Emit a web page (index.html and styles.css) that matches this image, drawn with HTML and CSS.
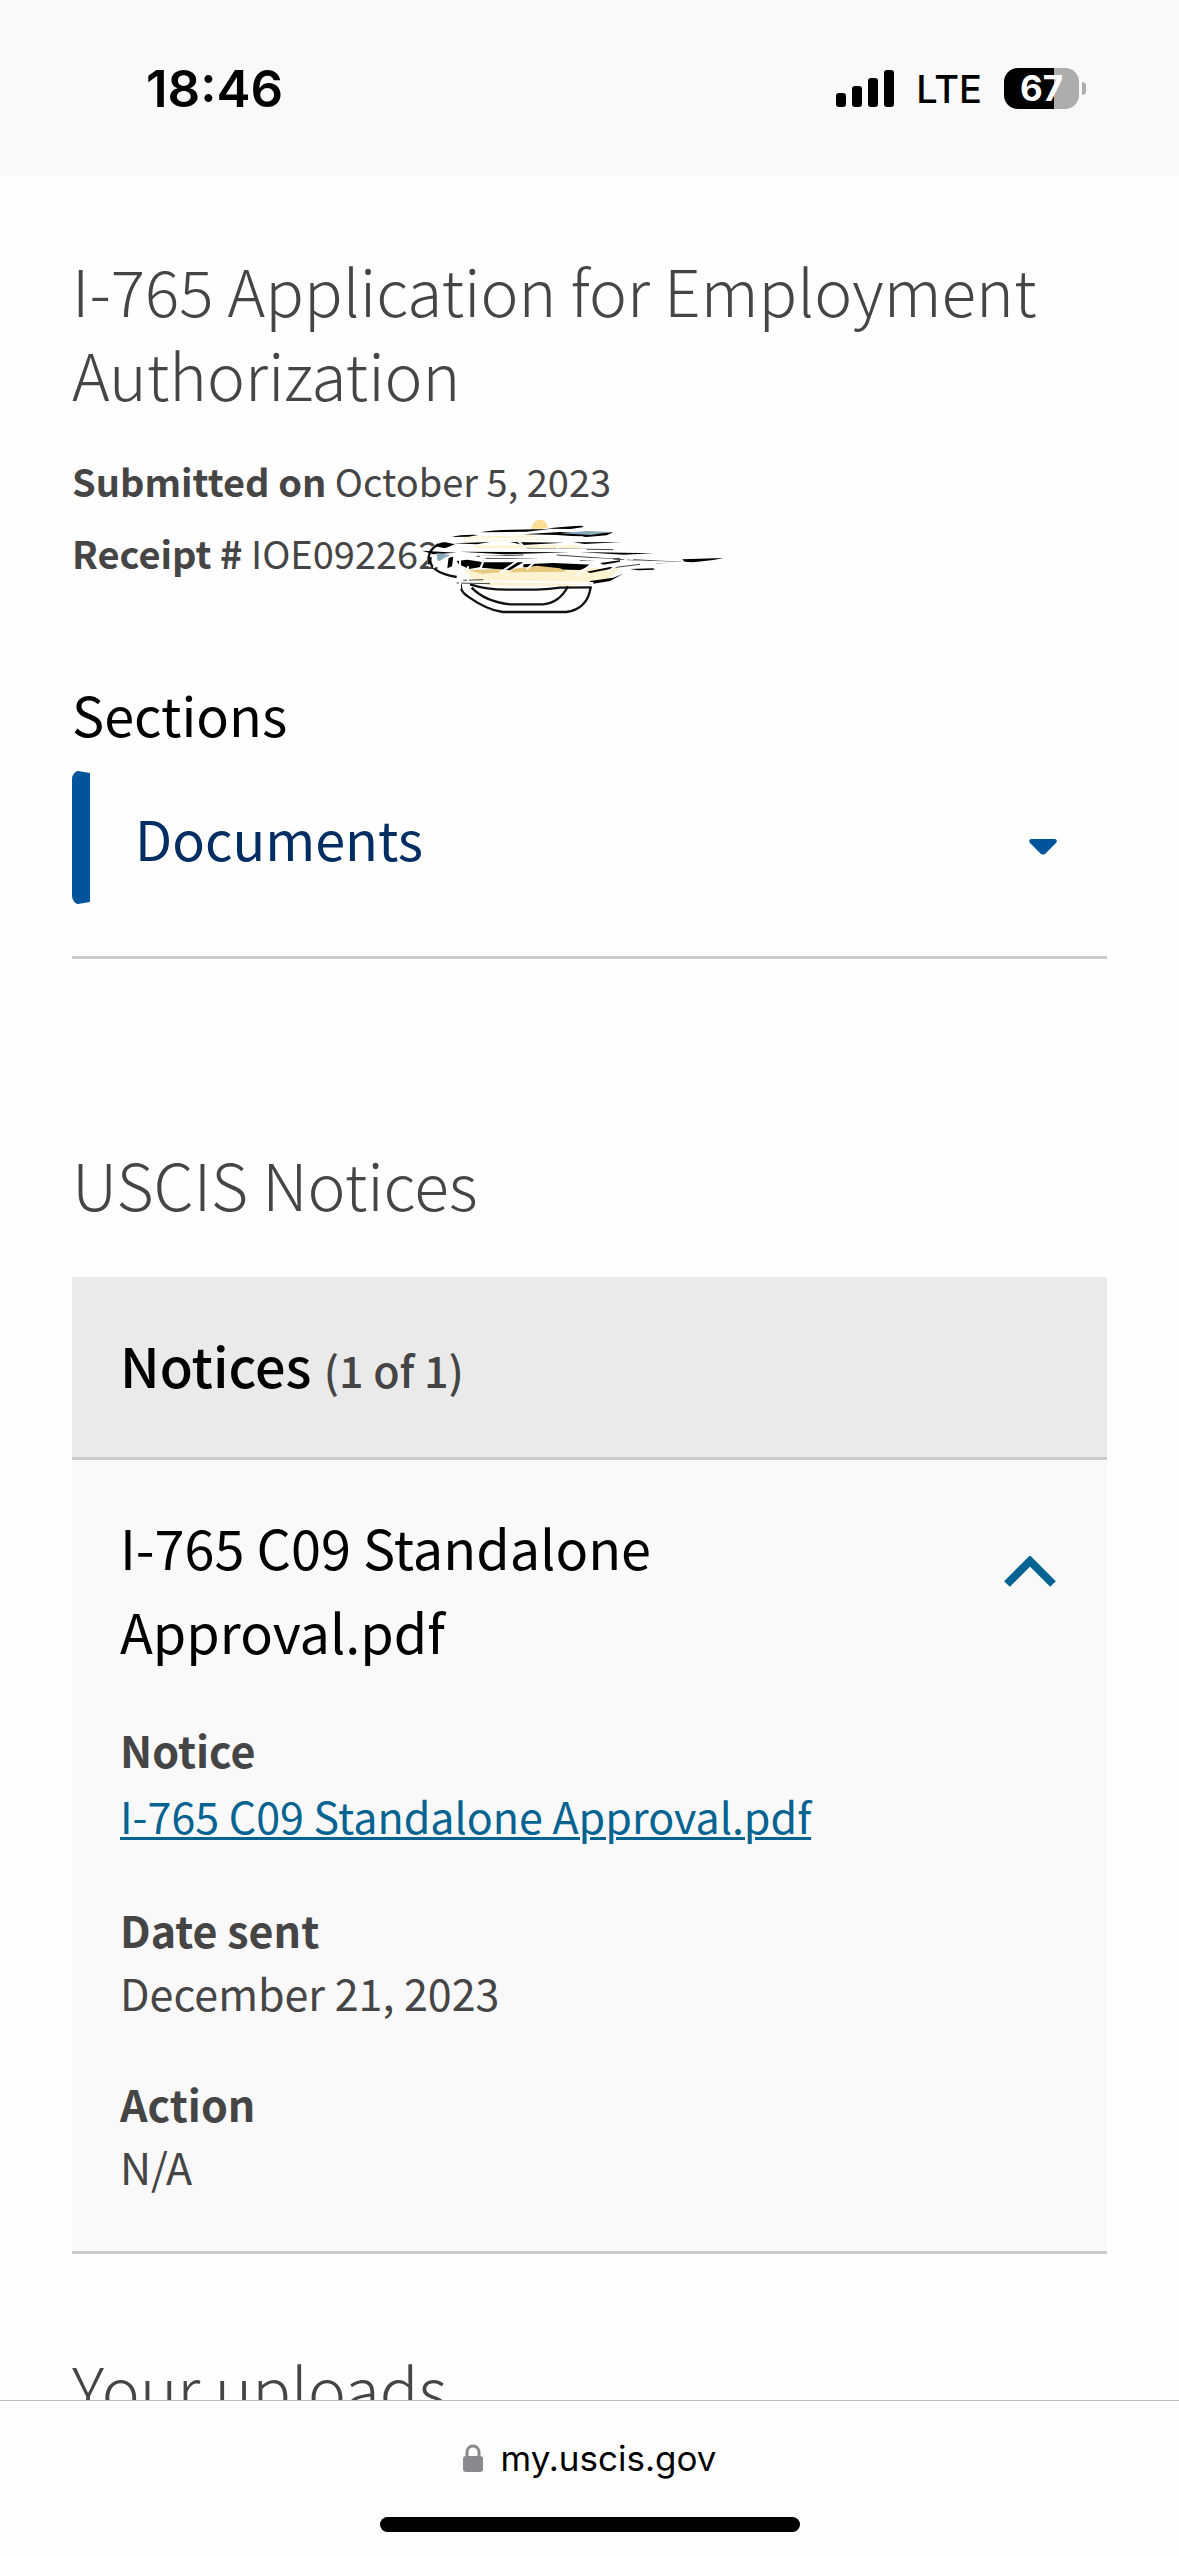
FILE: index.html
```html
<!DOCTYPE html>
<html lang="en">
<head>
    <meta charset="UTF-8">
    <meta name="viewport" content="width=device-width, initial-scale=1.0">
    <title>I-765 Application for Employment Authorization</title>
    <link rel="stylesheet" href="styles.css">
</head>
<body>
    <!-- Status bar -->
    <header class="status-bar">
        <time class="clock">18:46</time>
        <div class="status-icons">
            <svg class="signal" viewBox="0 0 58 37" aria-hidden="true">
                <rect x="0" y="23" width="10" height="14" rx="3"/>
                <rect x="16" y="16" width="10" height="21" rx="3"/>
                <rect x="32" y="8" width="10" height="29" rx="3"/>
                <rect x="48" y="0" width="10" height="37" rx="3"/>
            </svg>
            <span class="network">LTE</span>
            <div class="battery"><span>67</span></div>
        </div>
    </header>

    <!-- Page content -->
    <main class="content">
        <h1 class="title">I-765 Application for Employment Authorization</h1>
        <p class="meta"><strong>Submitted on</strong> October 5, 2023</p>
        <p class="meta receipt">
            <strong>Receipt #</strong> IOE092262
            <svg class="scribble" viewBox="0 0 1020 390" aria-hidden="true">
                <!-- white and yellow underlay -->
                <path fill="#fadf94" d="M392 84q8-28 28-28t24 26z"/>
                <path fill="#fff" d="M165 102L540 80l100 14 40 60 170 28-180 20H190l-105-5-10-50z"/>
                <path fill="#fdf3d0" d="M190 108l200-6 60 14-260 6zM220 134l300-2 40 10-330 4zM190 206l310-8 160 4-40 36-110 16H270q-60-16-80-48z"/>
                <!-- loops under the number -->
                <g class="ink">
                    <path d="M183 250q-4 20 20 36 60 42 105 47h190q64-8 74-74"/>
                    <path d="M215 260q40 42 115 50h100q48-4 74-54"/>
                    <path d="M210 250q50 16 110 16h90q40-2 70-6l95-1"/>
                    <path d="M92 168q-12 44 78 60"/>
                    <path d="M115 130q-36 20-28 60"/>
                </g>
                <!-- top strokes -->
                <path d="M240 94q40-8 90-8l120-2-70 8zM440 83q40-6 104-9l8 4-40 6zM155 108q30-8 80-6l-30 5zM370 100l110-7 75 4 85-3-20 9-60 5-90-6z"/>
                <path fill="#8aa8bc" d="M480 97l80-7 72 3-60 9z"/>
                <path d="M105 136q14-14 32-12l28 6-30 12zM160 127l110-4-40 7zM330 123l160 2-120 7zM520 124l144-1-110 6z"/>
                <path d="M66 149l104 6-70 5zM180 152l330 2-200 6zM540 153l220 4-90 4z"/>
                <path fill="#8aa8bc" d="M110 156l40 6-26 20-12-4z"/>
                <path d="M146 168l14-2-4 30-14 6z"/>
                <!-- dark band -->
                <path d="M170 180l32-4 40 6v16l-34 6-32-14zM240 184l130 0-40 24-84-8zM370 190l90-4 120 5-40 16-100-2-70-6z"/>
                <path fill="#e7c980" d="M340 204l70-10 70 8 20 10-170 2zM205 208l90-4 10 10-60 4z"/>
                <path d="M560 212l70-14 20 2-80 16zM600 186l60-8 10 3-60 10zM690 204l70-2 4 4-50 2zM570 240l70-10 30-12-40 22-60 10z"/>
                <path d="M846 175l124-4-30 6-60 7-26-2z"/>
                <path d="M250 172h200M470 162l280 20M700 176l146 8M380 142l260 4M170 246l100 2M190 238l60-2M640 200l80-10M540 178l120-6M770 186l60-2M230 166l140-4" class="thin"/>
                <!-- white strokes over everything -->
                <g class="erase">
                    <path d="M-6 190q12 28 36 18M100 200q60-56 90-26"/>
                    <path d="M180 264v-90M204 196v48M240 206l16-40M300 215l60-40M380 205l50-44"/>
                    <path d="M120 144l440 2M150 117l400-8M240 166l400 10"/>
                    <path d="M350 118q22 14 26 28M470 142l34-24M530 224l60-46M620 214l60-40"/>
                    <path d="M660 180l190 6M250 240l330 6"/>
                </g>
            </svg>
        </p>

        <h2 class="sections-label">Sections</h2>
        <button class="section-picker" type="button" aria-haspopup="listbox">
            <span>Documents</span>
            <svg class="caret" viewBox="0 0 28 16" aria-hidden="true">
                <path d="M2 0h24q3 1 1 4L16 15q-2 1-4 0L1 4q-2-3 1-4z"/>
            </svg>
        </button>
        <hr class="divider">

        <h2 class="title notices-title">USCIS Notices</h2>
        <section class="card">
            <h3 class="card-header">Notices <span class="count">(1 of 1)</span></h3>
            <div class="card-body">
                <button class="card-toggle" type="button" aria-expanded="true">
                    <span class="card-name">I-765 C09 Standalone Approval.pdf</span>
                    <svg class="chevron" viewBox="0 0 52 32" aria-hidden="true">
                        <path d="M3 28L26 5l23 23"/>
                    </svg>
                </button>
                <dl class="details">
                    <div>
                        <dt>Notice</dt>
                        <dd class="file"><a href="#">I-765 C09 Standalone Approval.pdf</a></dd>
                    </div>
                    <div>
                        <dt>Date sent</dt>
                        <dd>December 21, 2023</dd>
                    </div>
                    <div>
                        <dt>Action</dt>
                        <dd>N/A</dd>
                    </div>
                </dl>
            </div>
        </section>

        <h2 class="title uploads-title">Your uploads</h2>
    </main>

    <!-- Browser toolbar -->
    <footer class="toolbar">
        <button class="address" type="button">
            <svg class="lock" viewBox="0 0 20 28" aria-hidden="true">
                <path d="M4 13V8a6 6 0 0 1 12 0v5" fill="none" stroke="#8a8a8e" stroke-width="3"/>
                <rect y="12" width="20" height="16" rx="3" fill="#8a8a8e"/>
            </svg>
            <span>my.uscis.gov</span>
        </button>
        <div class="home-indicator"></div>
    </footer>
</body>
</html>
```

FILE: styles.css
```css
:root {
    --text-color: #454545;
    --blue: #00549c;
    --navy: #002d62;
    --link: #046391;
    --line: #cbcbcb;
    --page-font: "Noto Sans CJK JP", "Noto Sans", sans-serif;
    --ui-font: Inter, "Liberation Sans", sans-serif;
}

* {
    margin: 0;
    padding: 0;
    box-sizing: border-box;
}

body {
    display: flex;
    flex-direction: column;
    height: 100vh;
    background-color: #fefefe;
    color: var(--text-color);
    font-family: var(--page-font);
}

button {
    border: 0;
    background: none;
    color: inherit;
    font: inherit;
    text-align: left;
    cursor: pointer;
}

/* Status bar */
.status-bar {
    display: flex;
    flex: none;
    align-items: center;
    justify-content: space-between;
    height: 177px;
    padding: 0 93px 0 146px;
    background-color: #f9f9f9;
    color: #000;
    font-family: var(--ui-font);
}

.clock {
    font-size: 51px;
    font-weight: 600;
}

.status-icons {
    display: flex;
    align-items: center;
    gap: 22px;
}

.signal {
    width: 58px;
    height: 37px;
}

.network {
    font-size: 38px;
    font-weight: 500;
}

.battery {
    position: relative;
    width: 75px;
    height: 41px;
    margin-right: 7px;
    border-radius: 14px;
    background: linear-gradient(90deg, #000 67%, #adadad 67%);
    color: #fff;
    font-size: 35px;
    font-weight: 700;
    line-height: 41px;
    text-align: center;
}

.battery::after {
    content: "";
    position: absolute;
    top: 14px;
    right: -7px;
    width: 4px;
    height: 13px;
    border-radius: 0 4px 4px 0;
    background-color: #adadad;
}

/* Content */
.content {
    flex: 1;
    min-height: 0;
    overflow: hidden;
    padding: 70px 72px 0;
}

.title {
    font-size: 64px;
    font-weight: 300;
    line-height: 84px;
}

.meta {
    margin-top: 12px;
    font-size: 38px;
    line-height: 60px;
}

.title + .meta {
    margin-top: 36px;
}

.receipt {
    position: relative;
}

.scribble {
    position: absolute;
    top: -22px;
    left: 328px;
    width: 340px;
    height: 130px;
}

.scribble .ink {
    fill: none;
    stroke: #111;
    stroke-width: 7;
}

.scribble .thin {
    fill: none;
    stroke: #444;
    stroke-width: 3;
}

.scribble .erase {
    fill: none;
    stroke: #fff;
    stroke-width: 6;
}

.sections-label {
    margin-top: 89px;
    color: #000;
    font-size: 54px;
    font-weight: 400;
    line-height: 84px;
}

.section-picker {
    display: flex;
    align-items: center;
    justify-content: space-between;
    width: 100%;
    height: 135px;
    margin-top: 14px;
    padding: 0 47px 0 45px;
    border: 3px solid transparent;
    border-left: 18px solid var(--blue);
    border-radius: 9px;
    color: var(--navy);
    font-size: 54px;
}

.caret {
    width: 28px;
    height: 16px;
    margin-top: 19px;
    fill: var(--blue);
}

.divider {
    height: 3px;
    margin-top: 51px;
    border: 0;
    background-color: var(--line);
}

.notices-title {
    margin-top: 182px;
}

/* Notices card */
.card {
    margin-top: 52px;
    border-bottom: 3px solid var(--line);
    background-color: #f9f9f9;
}

.card-header {
    padding: 46px 48px 50px;
    border-bottom: 3px solid var(--line);
    background-color: #eaeaea;
    color: #000;
    font-size: 54px;
    font-weight: 500;
    line-height: 84px;
}

.count {
    color: var(--text-color);
    font-size: 43px;
    line-height: 1;
}

.card-body {
    padding: 45px 51px 53px 48px;
}

.card-toggle {
    display: flex;
    align-items: flex-start;
    justify-content: space-between;
    gap: 48px;
    width: 100%;
    color: #000;
    font-size: 54px;
    line-height: 84px;
}

.chevron {
    flex: none;
    width: 52px;
    height: 32px;
    margin-top: 51px;
    fill: none;
    stroke: var(--link);
    stroke-width: 8;
}

.details {
    display: flex;
    flex-direction: column;
    gap: 48px;
    margin-top: 45px;
    font-size: 43px;
    line-height: 63px;
}

.details dt {
    font-weight: 700;
}

.details .file {
    line-height: 69px;
}

.file a {
    color: var(--link);
    text-decoration-thickness: 3px;
    text-underline-offset: 3px;
}

.uploads-title {
    margin-top: 91px;
}

/* Browser toolbar */
.toolbar {
    display: flex;
    flex: none;
    flex-direction: column;
    align-items: center;
    justify-content: space-between;
    height: 156px;
    padding: 33px 0 24px;
    border-top: 1px solid #bbb;
    background-color: #fdfdfd;
}

.address {
    display: flex;
    align-items: center;
    gap: 18px;
    color: #000;
    font-family: var(--ui-font);
    font-size: 35px;
    line-height: 48px;
}

.lock {
    width: 20px;
    height: 28px;
}

.home-indicator {
    width: 420px;
    height: 15px;
    border-radius: 8px;
    background-color: #000;
}
```
